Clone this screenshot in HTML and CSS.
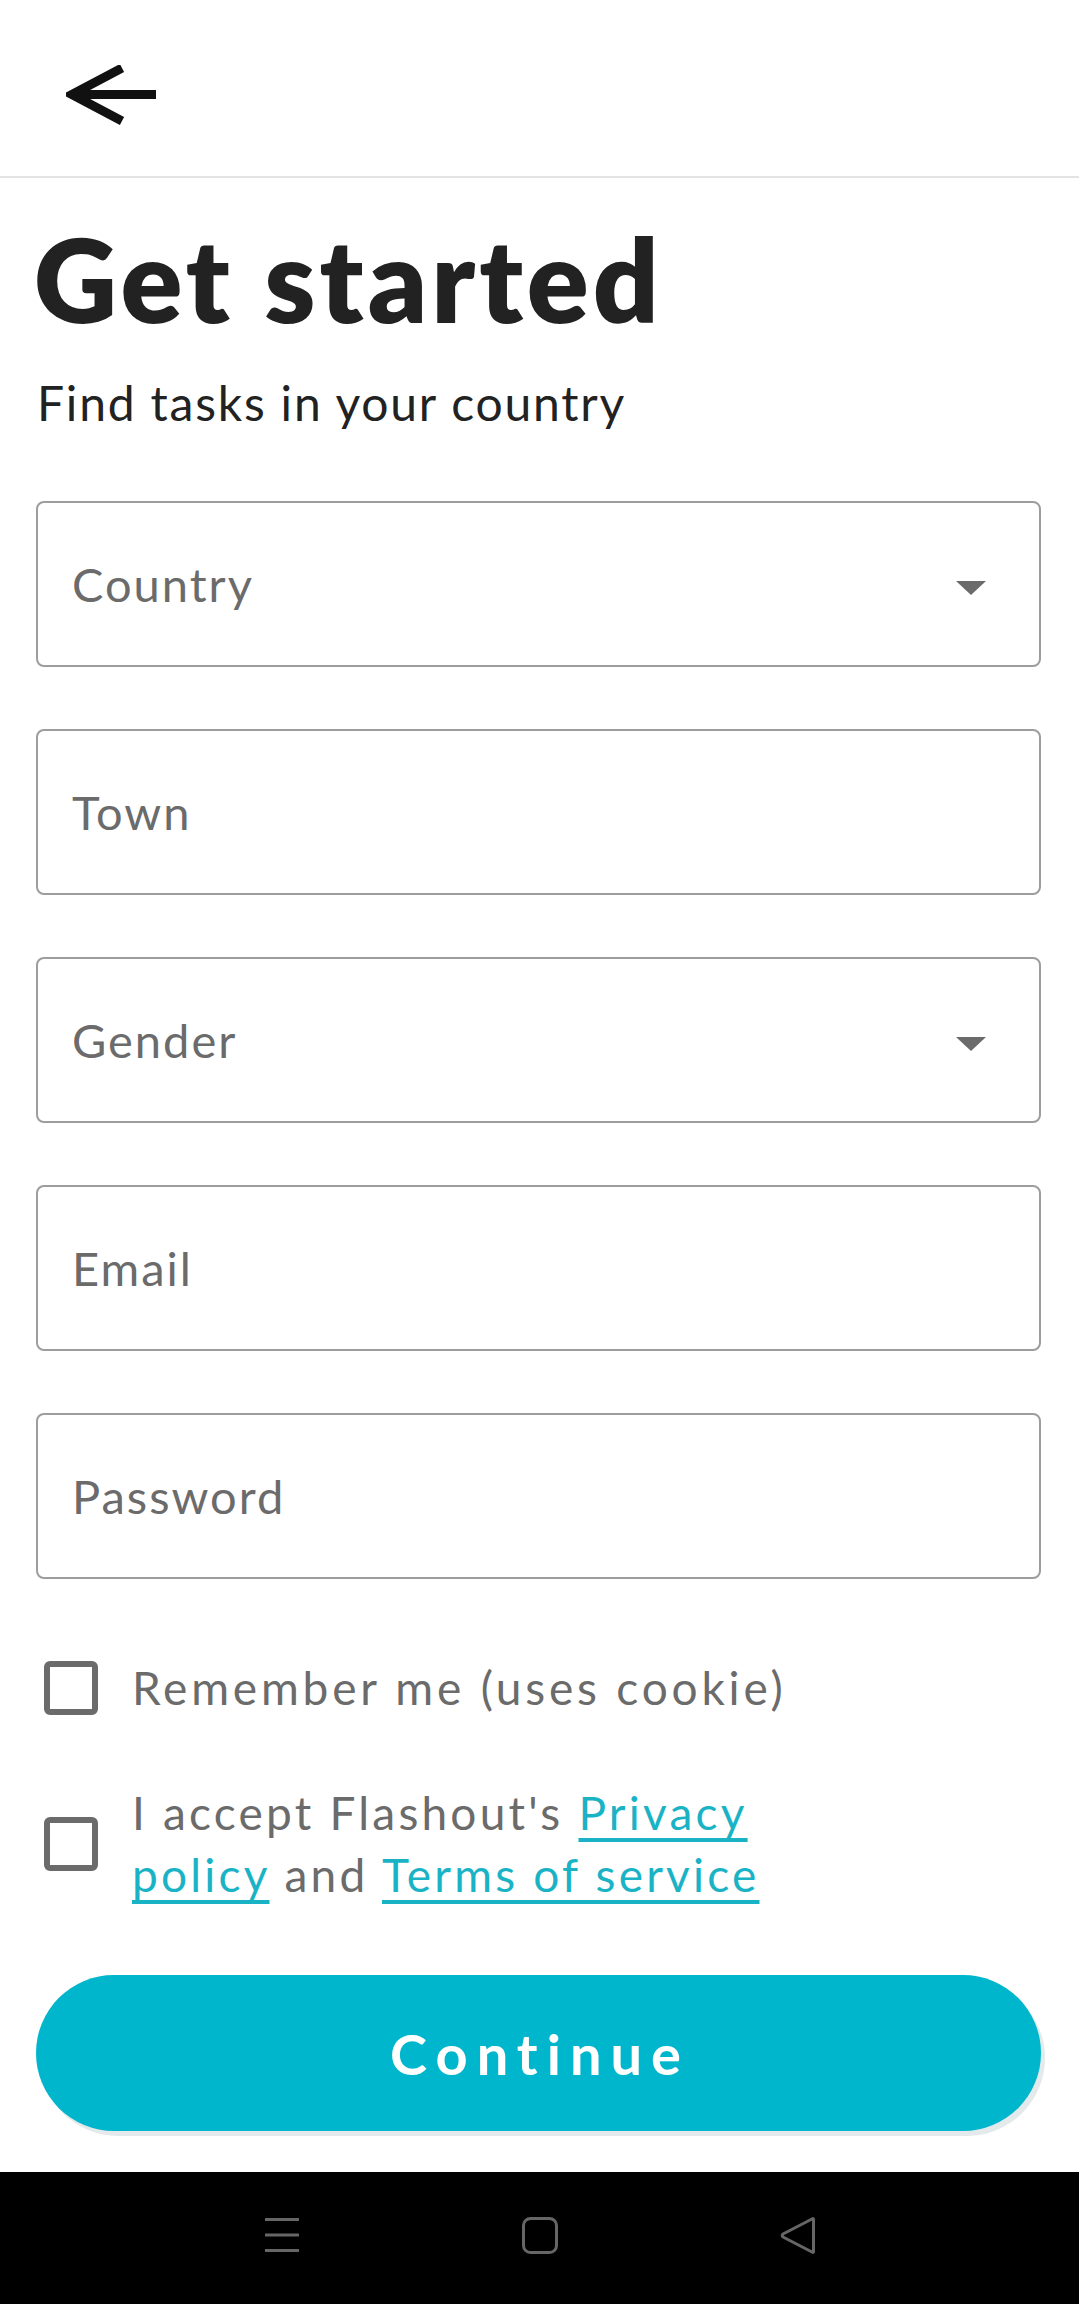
FILE: index.html
```html
<!DOCTYPE html>
<html lang="en">
<head>
<meta charset="utf-8">
<title>Get started</title>
<link rel="stylesheet" href="styles.css">
</head>
<body>
<div class="screen">
  <header class="topbar">
    <button class="back" aria-label="Back">
      <svg width="92" height="62" viewBox="0 0 92 62">
        <path d="M90 29.5 H8" stroke="#111" stroke-width="9" fill="none"/>
        <path d="M56 3 L6 29.5 L56 56" stroke="#111" stroke-width="9" fill="none" stroke-linejoin="miter"/>
      </svg>
    </button>
  </header>
  <main class="content">
    <h1 class="title">Get started</h1>
    <p class="subtitle">Find tasks in your country</p>
    <form class="form">
      <div class="field select"><span class="placeholder">Country</span><span class="caret"></span></div>
      <div class="field"><span class="placeholder">Town</span></div>
      <div class="field select"><span class="placeholder">Gender</span><span class="caret"></span></div>
      <div class="field"><span class="placeholder">Email</span></div>
      <div class="field"><span class="placeholder">Password</span></div>
      <div class="checks">
        <label class="check-row"><span class="box"></span><span class="label">Remember me (uses cookie)</span></label>
        <label class="check-row"><span class="box"></span><span class="label terms"><span class="line">I accept Flashout's <a href="#privacy">Privacy</a></span><span class="line"><a href="#privacy">policy</a> and <a href="#terms">Terms of service</a></span></span></label>
      </div>
      <button type="button" class="continue">Continue</button>
    </form>
  </main>
  <nav class="navbar">
    <svg width="36" height="36" viewBox="0 0 36 36"><path d="M1 2.5H35M1 18H35M1 33.5H35" stroke="#666" stroke-width="3"/></svg>
    <svg width="36" height="37" viewBox="0 0 36 37"><rect x="1.5" y="1.5" width="33" height="34" rx="7" stroke="#666" stroke-width="3" fill="none"/></svg>
    <svg width="36" height="37" viewBox="0 0 36 37"><path d="M33.5 2.5 V34.5 Q33.5 36 32 35 L3 20 Q1.5 18.5 3 17 L32 2 Q33.5 1 33.5 2.5Z" stroke="#666" stroke-width="3" fill="none" stroke-linejoin="round"/></svg>
  </nav>
</div>
</body>
</html>
```
FILE: styles.css
```css
* { box-sizing: border-box; }
html, body { margin: 0; padding: 0; background: #fff; }
body { font-family: Lato, "Open Sans", Arial, sans-serif; }
.screen { width: 1079px; height: 2304px; display: flex; flex-direction: column; }
.topbar { height: 178px; border-bottom: 2px solid #e3e3e3; display: flex; align-items: flex-start; padding: 65px 0 0 66px; }
.back { background: none; border: 0; padding: 0; margin: 0; width: 92px; height: 62px; display: block; }
.back svg { display: block; }
.content { flex: 1; padding: 0 38px 0 36px; }
.title { margin: 43px 0 0 -2px; font-size: 115px; line-height: 115px; font-weight: 800; color: #222; letter-spacing: 4px; }
.subtitle { margin: 43px 0 0 1px; font-size: 48px; line-height: 48px; color: #222; letter-spacing: 1.8px; }
.form { margin-top: 74px; display: flex; flex-direction: column; gap: 62px; }
.field { height: 166px; border: 2px solid #9d9d9d; border-radius: 8px; display: flex; align-items: center; justify-content: space-between; padding: 0 53px 0 34px; }
.placeholder { font-size: 47px; color: #6b6b6b; letter-spacing: 2px; }
.caret { width: 0; height: 0; margin-top: 8px; border-left: 15px solid transparent; border-right: 15px solid transparent; border-top: 14px solid #6b6b6b; }
.checks { display: flex; flex-direction: column; gap: 63px; margin-top: 16px; }
.check-row { display: flex; align-items: center; gap: 34px; padding-left: 8px; }
.box { width: 54px; height: 54px; flex: none; border: 6px solid #6b6b6b; border-radius: 6px; }
.label { font-size: 46px; line-height: 62px; color: #6b6b6b; letter-spacing: 3.8px; }
.label.terms { display: flex; flex-direction: column; letter-spacing: 3.2px; }
.label .line { display: block; white-space: nowrap; }
.label a { color: #1ab3c6; text-decoration: underline; text-decoration-thickness: 4px; text-underline-offset: 8px; }
.continue { margin-top: 7px; height: 156px; width: 1005px; border: 0; border-radius: 78px; background: #00b6cc; color: #fff; font-family: inherit; font-size: 56px; font-weight: 700; letter-spacing: 9px; padding-left: 9px; box-shadow: 4px 5px 0 #e4e9eb; cursor: pointer; }
.navbar { height: 132px; background: #000; display: flex; align-items: center; justify-content: center; gap: 222px; padding-bottom: 6px; margin-top: auto; }
.navbar svg { display: block; }
```
